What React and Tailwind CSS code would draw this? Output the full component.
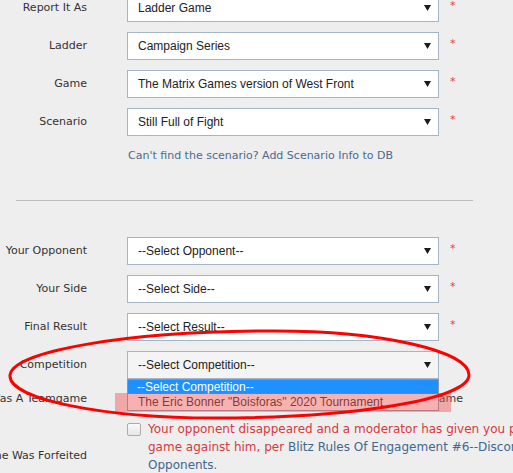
import React from 'react';

const label = "font-['DejaVu_Sans',Verdana,sans-serif] text-[11px] text-[#333]";
const arial = "font-['Liberation_Sans',Arial,sans-serif] text-[12px] text-[#222]";

function Arrow() {
  return (
    <svg width="7" height="6" viewBox="0 0 7 6" className="shrink-0">
      <path d="M0 0 H7 L3.5 6 Z" fill="#1a1a1a" />
    </svg>
  );
}

function Label({ children }) {
  return (
    <div className={`w-[87px] shrink-0 flex justify-end whitespace-nowrap ${label}`}>
      <span>{children}</span>
    </div>
  );
}

function SelectRow({ name, value, open, required = true, children }) {
  return (
    <div className="flex items-center h-[28px]">
      <Label>{name}</Label>
      <div
        className={`relative ml-[40px] w-[312px] h-[28px] shrink-0 border border-[#a3b5c6] flex items-center pl-[10px] pr-[7px] ${
          open ? 'bg-[#f4f4f4]' : 'bg-white'
        } ${arial}`}
      >
        <span className="flex-1 whitespace-nowrap">{value}</span>
        <Arrow />
        {children}
      </div>
      {required && (
        <span className="ml-[11px] font-['DejaVu_Sans',sans-serif] text-[11px] text-[#e2403f] -mt-[3px]">*</span>
      )}
    </div>
  );
}

export default function App() {
  return (
    <div className="relative w-[513px] h-[473px] overflow-hidden bg-[#eeeeee]">
      <div className="-mt-[6px] flex flex-col gap-[10px]">
        <SelectRow name="Report It As" value="Ladder Game" />
        <SelectRow name="Ladder" value="Campaign Series" />
        <SelectRow name="Game" value="The Matrix Games version of West Front" />
        <SelectRow name="Scenario" value="Still Full of Fight" />
      </div>

      <div className="mt-[13px] pl-[128px] leading-[14px] whitespace-nowrap font-['DejaVu_Sans',Verdana,sans-serif] text-[11px] text-[#4a6c8c]">
        Can't find the scenario? Add Scenario Info to DB
      </div>

      <div className="mt-[37px] ml-[16px] w-[457px] h-px bg-[#bdbdbd]" />

      <div className="mt-[36px] flex flex-col gap-[10px]">
        <SelectRow name="Your Opponent" value="--Select Opponent--" />
        <SelectRow name="Your Side" value="--Select Side--" />
        <SelectRow name="Final Result" value="--Select Result--" />
        <SelectRow name="Competition" value="--Select Competition--" open required={false}>
          <div className="absolute left-[-1px] top-[27px] z-10 w-[312px] border border-[#8797a8] bg-white">
            <div className="h-[14px] pl-[9px] bg-[#1e90ff] text-white leading-[14px] whitespace-nowrap">--Select Competition--</div>
            <div className="h-[16px] pl-[10px] leading-[16px] whitespace-nowrap">The Eric Bonner "Boisforas" 2020 Tournament</div>
          </div>
        </SelectRow>
      </div>

      {/* teamgame row (mostly hidden behind the open list) */}
      <div className="mt-[10px] flex items-center h-[20px]">
        <Label>Game Was A Teamgame</Label>
        <div className="ml-[40px] w-[14px] h-[13px] shrink-0 rounded-[2px] border border-[#ababab] bg-[#f3f3f3]" />
        <div className={`ml-[7px] w-[315px] flex justify-end overflow-hidden whitespace-nowrap ${label} text-[#222]`}>
          <span>This was a teamgame</span>
        </div>
      </div>

      {/* forfeit row */}
      <div className="mt-[11px] flex">
        <div className="w-[87px] shrink-0 flex items-center">
          <Label>Game Was Forfeited</Label>
        </div>
        <div className="ml-[40px] mt-[3px] w-[14px] h-[13px] shrink-0 rounded-[2px] border border-[#ababab] bg-gradient-to-b from-[#fafafa] to-[#e6e6e6]" />
        <div className="ml-[7px] whitespace-nowrap font-['DejaVu_Sans',Verdana,sans-serif] text-[12px] leading-[18px] text-[#d9383e]">
          <div>Your opponent disappeared and a moderator has given you permission to report this</div>
          <div>
            game against him, per <span className="text-[#41678f]">Blitz Rules Of Engagement #6--Disconnected</span>
          </div>
          <div>
            <span className="text-[#41678f]">Opponents</span>.
          </div>
          <div>The game will be recorded as a forfeit.</div>
        </div>
      </div>

      {/* annotation overlays */}
      <div className="absolute left-[115px] top-[393px] w-[336px] h-[19px] bg-[rgba(240,90,90,0.47)] z-20" />
      <svg className="absolute inset-0 z-30 pointer-events-none" width="513" height="473" viewBox="0 0 513 473">
        <path
          d="M10 376 C10 351 129 331 275 331 C382 331 469 351 469 375 C469 399 355 418 215 418 C102 418 10 399 10 376 Z"
          fill="none"
          stroke="#ff0000"
          strokeWidth="3"
        />
      </svg>
    </div>
  );
}
